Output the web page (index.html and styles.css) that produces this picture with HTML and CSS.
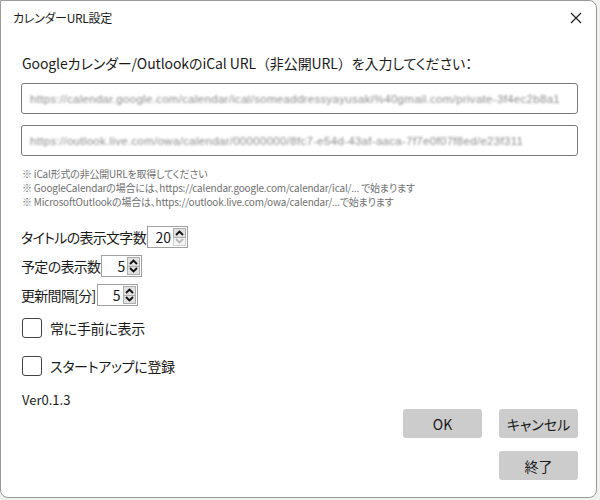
FILE: index.html
```html
<!DOCTYPE html>
<html lang="ja">
<head>
<meta charset="utf-8">
<title>カレンダーURL設定</title>
<link rel="stylesheet" href="styles.css">
</head>
<body>
<div class="window">
  <div class="titlebar">
    <span class="title">カレンダーURL設定</span>
    <span class="close">
      <svg width="12" height="12" viewBox="0 0 12 12"><path d="M1 1L11 11M11 1L1 11" stroke="#1a1a1a" stroke-width="1.1" fill="none"/></svg>
    </span>
  </div>
  <div class="content">
    <p class="heading">Googleカレンダー/OutlookのiCal URL<span class="wide">（非公開URL）</span>を入力してください：</p>
    <div class="urlbox"><span class="blur">https://calendar.google.com/calendar/ical/someaddressyayusaki%40gmail.com/private-3f4ec2b8a1</span></div>
    <div class="urlbox"><span class="blur">https://outlook.live.com/owa/calendar/00000000/8fc7-e54d-43af-aaca-7f7e0f07f8ed/e23f311</span></div>
    <div class="notes">
      <div>※ iCal形式の非公開URLを取得してください</div>
      <div>※ GoogleCalendarの場合には、https://calendar.google.com/calendar/ical/... で始まります</div>
      <div>※ MicrosoftOutlookの場合は、https://outlook.live.com/owa/calendar/...で始まります</div>
    </div>
    <div class="spinrows">
      <div class="spinrow">
        <span class="label">タイトルの表示文字数</span>
        <span class="spin">
          <span class="val">20</span>
          <span class="btns">
            <span class="sbtn"><svg width="9" height="6" viewBox="0 0 9 6"><path d="M1 5L4.5 1.5L8 5" stroke="#111" stroke-width="1.8" fill="none"/></svg></span>
            <span class="sbtn off"><svg width="9" height="6" viewBox="0 0 9 6"><path d="M1 1L4.5 4.5L8 1" stroke="#b8b8b8" stroke-width="1.8" fill="none"/></svg></span>
          </span>
        </span>
      </div>
      <div class="spinrow">
        <span class="label">予定の表示数</span>
        <span class="spin">
          <span class="val">5</span>
          <span class="btns">
            <span class="sbtn"><svg width="9" height="6" viewBox="0 0 9 6"><path d="M1 5L4.5 1.5L8 5" stroke="#111" stroke-width="1.8" fill="none"/></svg></span>
            <span class="sbtn"><svg width="9" height="6" viewBox="0 0 9 6"><path d="M1 1L4.5 4.5L8 1" stroke="#111" stroke-width="1.8" fill="none"/></svg></span>
          </span>
        </span>
      </div>
      <div class="spinrow">
        <span class="label">更新間隔[分]</span>
        <span class="spin">
          <span class="val">5</span>
          <span class="btns">
            <span class="sbtn"><svg width="9" height="6" viewBox="0 0 9 6"><path d="M1 5L4.5 1.5L8 5" stroke="#111" stroke-width="1.8" fill="none"/></svg></span>
            <span class="sbtn"><svg width="9" height="6" viewBox="0 0 9 6"><path d="M1 1L4.5 4.5L8 1" stroke="#111" stroke-width="1.8" fill="none"/></svg></span>
          </span>
        </span>
      </div>
    </div>
    <div class="checks">
      <label class="check"><span class="box"></span><span>常に手前に表示</span></label>
      <label class="check"><span class="box"></span><span>スタートアップに登録</span></label>
    </div>
    <div class="version">Ver0.1.3</div>
    <div class="buttons">
      <span class="btn">OK</span>
      <span class="btn">キャンセル</span>
      <span class="btn exit">終了</span>
    </div>
  </div>
</div>
</body>
</html>
```

FILE: styles.css
```css
* { box-sizing: border-box; }
html, body { margin: 0; padding: 0; }
body {
  width: 600px;
  height: 500px;
  background: #eef2ee;
  font-family: "Noto Sans CJK JP", "Noto Sans", sans-serif;
  font-feature-settings: "palt";
  color: #1a1a1a;
}
.window {
  width: 597px;
  height: 498px;
  background: #ffffff;
  border: 1px solid #9a9a9a;
  border-radius: 0 8px 8px 8px;
  display: flex;
  flex-direction: column;
}
.titlebar {
  height: 33px;
  display: flex;
  align-items: center;
  justify-content: space-between;
  padding: 0 14px 0 12px;
}
.title { font-size: 12px; letter-spacing: -0.3px; }
.close { display: flex; align-items: center; }
.content {
  padding: 0 18px 0 20px;
  display: flex;
  flex-direction: column;
}
.heading {
  margin: 19px 0 0 1px;
  font-size: 14px;
  line-height: 20px;
  letter-spacing: -0.1px;
}
.wide { font-feature-settings: normal; }
.urlbox {
  margin-top: 10px;
  height: 31px;
  border: 1px solid #7a7a7a;
  border-radius: 3px;
  display: flex;
  align-items: center;
  padding: 0 8px;
  overflow: hidden;
}
.urlbox + .urlbox { margin-top: 11px; }
.blur {
  font-size: 11.5px;
  color: #8a8a8a;
  letter-spacing: 0.3px;
  white-space: nowrap;
  filter: blur(0.8px);
  font-family: "Liberation Sans", sans-serif;
}
.notes {
  margin: 11px 0 0 1px;
  font-size: 10px;
  line-height: 14px;
  color: #707070;
  letter-spacing: -0.2px;
}
.spinrows {
  margin-top: 17px;
  display: flex;
  flex-direction: column;
  gap: 7px;
}
.spinrow {
  display: flex;
  align-items: center;
  height: 22px;
}
.label { font-size: 14px; line-height: 22px; letter-spacing: -0.7px; }
.spin {
  display: flex;
  height: 22px;
  border: 1px solid #a0a0a0;
  margin-left: 1px;
}
.val {
  width: 25px;
  text-align: right;
  font-size: 14px;
  line-height: 20px;
  padding-right: 2px;
}
.btns {
  display: flex;
  flex-direction: column;
  width: 14px;
  padding: 1px 1px 1px 0;
}
.sbtn {
  flex: 1;
  display: flex;
  align-items: center;
  justify-content: center;
  background: #e1e1e1;
  border: 1px solid #adadad;
}
.sbtn + .sbtn { border-top: none; }
.sbtn.off { background: #f4f4f4; border-color: #d0d0d0; }
.checks {
  margin-top: 12px;
  display: flex;
  flex-direction: column;
  gap: 18px;
}
.check {
  display: flex;
  align-items: center;
  gap: 8px;
  font-size: 14px;
  height: 20px;
  margin-left: 1px;
  letter-spacing: -0.3px;
}
.box {
  width: 20px;
  height: 20px;
  border: 1px solid #444;
  border-radius: 3px;
}
.version {
  margin: 15px 0 0 1px;
  font-size: 13px;
  line-height: 18px;
}
.buttons {
  align-self: flex-end;
  display: grid;
  grid-template-columns: 79px 79px;
  column-gap: 17px;
  row-gap: 13px;
}
.btn {
  height: 29px;
  background: #cccccc;
  border-radius: 3px;
  display: flex;
  align-items: center;
  justify-content: center;
  font-size: 14px;
}
.btn.exit { grid-column: 2; }
```
